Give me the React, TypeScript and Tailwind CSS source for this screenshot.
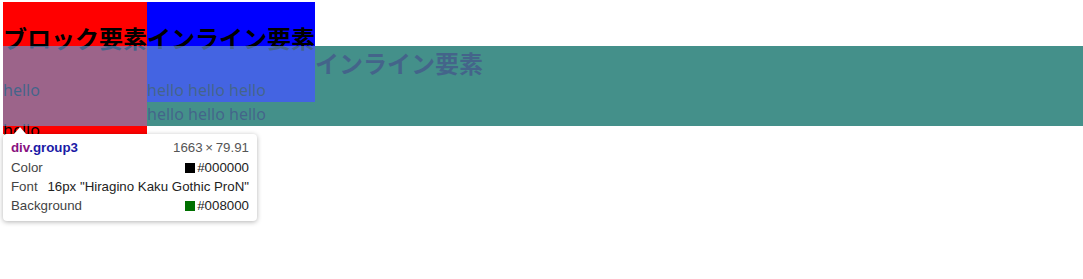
export default function App() {
  return (
    <div className="relative min-h-screen bg-white font-['Noto_Sans','Noto_Sans_CJK_JP',sans-serif] text-black">
      {/* page content */}
      <div className="pl-[3px] pt-[2px]">
        <div className="float-left h-[132px] w-[144px] bg-[#ff0000]">
          <h1 className="whitespace-nowrap pt-[25px] text-[24px] font-bold leading-[24px]">ブロック要素</h1>
          <p className="mt-[27px] text-[16px] leading-[24px]">hello</p>
          <p className="mt-[16px] text-[16px] leading-[24px]">hello</p>
        </div>
        <div className="float-left h-[100px] w-[168px] bg-[#0000ff]">
          <h1 className="whitespace-nowrap pt-[25px] text-[24px] font-bold leading-[24px]">インライン要素</h1>
          <p className="mt-[27px] text-[16px] leading-[24px]">hello hello hello</p>
          <p className="text-[16px] leading-[24px]">hello hello hello</p>
        </div>
        <div className="group3 mt-[44px] h-[80px] bg-[#008000]">
          <h2 className="pt-[6px] text-[24px] font-bold leading-[24px]">インライン要素</h2>
        </div>
      </div>

      {/* devtools highlight */}
      <div className="absolute left-[3px] right-0 top-[46px] h-[80px] bg-[rgba(104,152,210,0.655)]" />

      {/* devtools tooltip */}
      <div className="absolute left-[3px] top-[134px] w-[254px] rounded-[4px] bg-white px-[8px] pb-[6px] pt-[3px] font-['Liberation_Sans',Arial,sans-serif] text-[13.3px] text-[#444] shadow-[0_1px_5px_rgba(0,0,0,0.3)]">
        <svg className="absolute left-[11px] top-[-7px]" width="12" height="7" viewBox="0 0 12 7">
          <path d="M0 7 L6 0 L12 7 Z" fill="#ffffff" />
        </svg>
        <div className="flex h-[21px] items-center justify-between">
          <span className="font-bold">
            <span className="text-[#881280]">div</span>
            <span className="text-[#1a1aa6]">.group3</span>
          </span>
          <span className="text-[#555]">1663{"\u2009"}×{"\u2009"}79.91</span>
        </div>
        <div className="flex h-[19px] items-center justify-between">
          <span>Color</span>
          <span className="flex items-center gap-[2px] text-[#222]">
            <span className="inline-block h-[10px] w-[10px] bg-black" />
            #000000
          </span>
        </div>
        <div className="flex h-[19px] items-center justify-between">
          <span>Font</span>
          <span className="text-[#222]">16px "Hiragino Kaku Gothic ProN"</span>
        </div>
        <div className="flex h-[19px] items-center justify-between">
          <span>Background</span>
          <span className="flex items-center gap-[2px] text-[#222]">
            <span className="inline-block h-[10px] w-[10px] bg-[#007000]" />
            #008000
          </span>
        </div>
      </div>
    </div>
  );
}
